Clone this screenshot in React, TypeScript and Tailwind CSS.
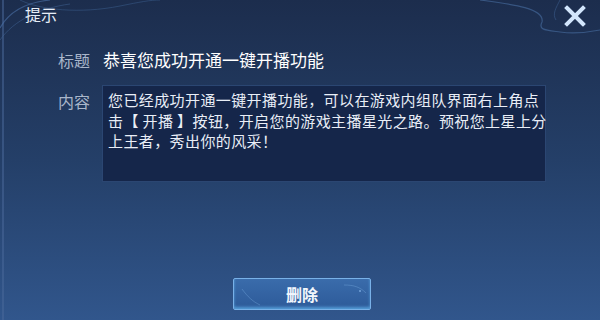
import React from "react";

const font = { fontFamily: '"Noto Sans CJK SC", "Noto Sans", sans-serif' };

export default function App() {
  return (
    <div
      className="relative w-[600px] h-[320px] overflow-hidden bg-gradient-to-b from-[#1c2d4d] via-[#243f68] to-[#31568c] text-white"
      style={font}
    >
      {/* decorative swirls */}
      <svg className="absolute left-0 top-0 pointer-events-none" width="600" height="320" viewBox="0 0 600 320" fill="none">
        <path d="M3 0 V320" stroke="#4a6a9a" strokeWidth="1.5" opacity="0.7" />
        <path d="M0 28 C10 10 30 2 50 0" stroke="#4b72a8" strokeWidth="1.2" opacity="0.6" />
        <path d="M0 40 C14 20 40 8 70 4" stroke="#3f6496" strokeWidth="1" opacity="0.5" />
        <path d="M20 0 C40 10 80 14 120 6 C140 2 150 0 160 0" stroke="#3c5f90" strokeWidth="1" opacity="0.5" />
        <path d="M480 0 C510 4 545 8 542 22 C538 30 545 30 560 32 C575 34 590 32 600 30" stroke="#4a6fa3" strokeWidth="1.2" opacity="0.6" />
        <path d="M560 0 C556 8 552 14 556 20" stroke="#3f6496" strokeWidth="1" opacity="0.5" />
      </svg>

      <div className="relative flex flex-col h-full">
        {/* header */}
        <div className="flex items-start justify-between h-[40px] pl-[25px] pr-[14px] pt-[3px]">
          <span className="text-[16px] leading-[22px] text-[#e6edf8]">提示</span>
          <svg width="22" height="22" viewBox="0 0 22 22" className="mt-[2px]">
            <path d="M3 3 L19 19 M19 3 L3 19" stroke="#d2e6fc" strokeWidth="4" strokeLinecap="square" />
          </svg>
        </div>

        {/* title row */}
        <div className="flex items-center pl-[58px] h-[40px]">
          <span className="w-[32px] text-[16px] leading-[20px] text-[#a9b6ca]">标题</span>
          <span className="ml-[13px] text-[17px] leading-[20px] text-white">恭喜您成功开通一键开播功能</span>
        </div>

        {/* content row */}
        <div className="flex items-start pl-[58px] mt-[5px]">
          <span className="w-[32px] mt-[6px] text-[16px] leading-[20px] text-[#a9b6ca]">内容</span>
          <div className="ml-[12px] w-[444px] h-[97px] bg-[#15264a] border border-[#2b4672] px-[5px] pt-[4px] text-[15px] leading-[20.5px] tracking-[0.4px] text-[#e9eef7] whitespace-nowrap">
            <div>您已经成功开通一键开播功能，可以在游戏内组队界面右上角点</div>
            <div>击【 开播 】按钮，开启您的游戏主播星光之路。预祝您上星上分</div>
            <div>上王者，秀出你的风采！</div>
          </div>
        </div>

        {/* button */}
        <div className="flex justify-center mt-[96px] pl-[4px]">
          <button className="relative w-[138px] h-[32px] rounded-[2px] border border-[#79b1e8] bg-gradient-to-b from-[#3a6cab] to-[#2d5a99] shadow-[inset_0_-2px_3px_rgba(110,200,255,0.6)] text-[16px] font-bold text-[#f2f6fc] flex items-center justify-center">
            <svg className="absolute left-0 top-0" width="138" height="32" viewBox="0 0 138 32" fill="none">
              <path d="M8 10 C14 18 18 22 26 26" stroke="#7fb2e6" strokeWidth="0.7" opacity="0.5" />
              <path d="M110 6 C120 6 126 8 132 14" stroke="#7fb2e6" strokeWidth="0.7" opacity="0.5" />
              <circle cx="126" cy="12" r="0.8" fill="#9fd0ff" />
            </svg>
            <span className="relative">删除</span>
          </button>
        </div>
      </div>
    </div>
  );
}
